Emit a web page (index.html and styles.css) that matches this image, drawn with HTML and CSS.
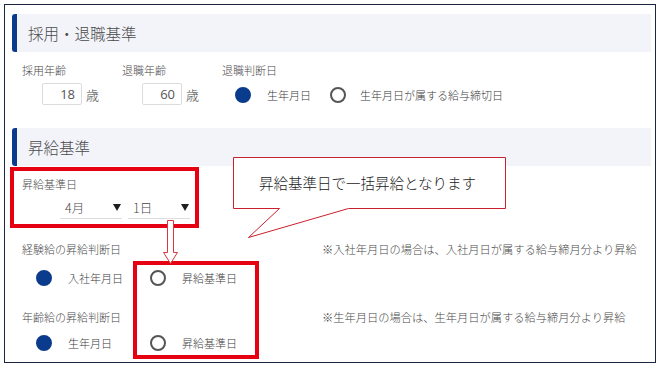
FILE: index.html
```html
<!DOCTYPE html>
<html lang="ja">
<head>
<meta charset="utf-8">
<link rel="stylesheet" href="styles.css">
</head>
<body>
<div class="frame">
  <div class="sec-head">採用・退職基準</div>
  <div class="cols">
    <div class="col">
      <div class="lbl">採用年齢</div>
      <div class="ctl ind-input"><span class="inp">18</span><span class="unit">歳</span></div>
    </div>
    <div class="col">
      <div class="lbl">退職年齢</div>
      <div class="ctl ind-input"><span class="inp">60</span><span class="unit">歳</span></div>
    </div>
    <div class="col col-wide">
      <div class="lbl">退職判断日</div>
      <div class="ctl ind-radio">
        <span class="opt opt-a"><span class="radio on"></span><span class="opt-text">生年月日</span></span>
        <span class="opt"><span class="radio"></span><span class="opt-text">生年月日が属する給与締切日</span></span>
      </div>
    </div>
  </div>

  <div class="sec-head sec-head-2">昇給基準</div>
  <div class="field">
    <div class="lbl">昇給基準日</div>
    <div class="selects">
      <span class="sel"><span class="sel-text">4月</span><span class="tri"></span></span>
      <span class="sel"><span class="sel-text">1日</span><span class="tri"></span></span>
    </div>
  </div>

  <div class="rowhead rh-1"><span class="lbl">経験給の昇給判断日</span><span class="note">※入社年月日の場合は、入社月日が属する給与締月分より昇給</span></div>
  <div class="radios r-1">
    <span class="opt opt-b"><span class="radio on"></span><span class="opt-text">入社年月日</span></span>
    <span class="opt"><span class="radio"></span><span class="opt-text">昇給基準日</span></span>
  </div>

  <div class="rowhead rh-2"><span class="lbl">年齢給の昇給判断日</span><span class="note">※生年月日の場合は、生年月日が属する給与締月分より昇給</span></div>
  <div class="radios r-2">
    <span class="opt opt-b"><span class="radio on"></span><span class="opt-text">生年月日</span></span>
    <span class="opt"><span class="radio"></span><span class="opt-text">昇給基準日</span></span>
  </div>

  <div class="redbox redbox-1"></div>
  <div class="redbox redbox-2"></div>

  <svg class="arrow" width="20" height="46" viewBox="0 0 20 46">
    <path d="M7.5 0.5 H13.5 V32.5 H17.5 L10.5 43.5 L3.5 32.5 H7.5 Z" fill="#fff" stroke="#d9363e" stroke-width="1"/>
  </svg>

  <div class="callout">
    <svg class="callout-shape" width="276" height="84" viewBox="0 0 276 84">
      <path d="M0.5 0.5 H272.5 V51.5 H115.5 L15.5 80.5 L46.5 51.5 H0.5 Z" fill="#fff" stroke="#c8202e" stroke-width="1"/>
    </svg>
    <div class="callout-text">昇給基準日で一括昇給となります</div>
  </div>
</div>
</body>
</html>
```

FILE: styles.css
```css
* { box-sizing: border-box; }
html, body { margin: 0; padding: 0; background: #fff; }
body {
  font-family: "Noto Sans CJK JP", "Noto Sans", sans-serif;
  font-weight: 300;
  color: #3c3c3c;
}
.frame {
  position: relative;
  margin: 4px 0 0 4px;
  width: 652px;
  height: 359px;
  border: 1px solid #1b2640;
  overflow: hidden;
}
.sec-head {
  margin: 9px 4px 0 7px;
  height: 38px;
  background: #f3f4fa;
  border-left: 5px solid #0b3b8c;
  border-radius: 3px 0 0 3px;
  padding-left: 11px;
  display: flex;
  align-items: center;
  font-size: 15.5px;
  color: #4a4a4a;
}
.sec-head-2 { margin-top: 22px; }

.lbl { font-size: 11px; line-height: 14px; color: #4a4a4a; }

.cols {
  display: flex;
  padding-left: 17px;
  margin-top: 11px;
}
.col { width: 100px; }
.col-wide { width: auto; }
.ctl { display: flex; align-items: center; margin-top: 6px; height: 22px; }
.ind-input { padding-left: 20px; }
.ind-radio { padding-left: 13px; margin-top: 7px; }
.inp {
  width: 40px;
  height: 22px;
  border: 1px solid #dcdcdc;
  border-radius: 2px;
  font-size: 13px;
  line-height: 20px;
  text-align: right;
  padding-right: 6px;
  color: #555;
  font-family: "Open Sans", "Noto Sans", sans-serif;
  font-weight: 400;
}
.unit { margin-left: 4px; font-size: 13px; color: #4a4a4a; }

.opt { display: inline-flex; align-items: center; }
.opt-a { width: 95px; }
.opt-b { width: 114px; }
.radio {
  width: 16px; height: 16px;
  border-radius: 50%;
  border: 2px solid #555;
  background: #fff;
  flex: none;
}
.radio.on { background: #0b3b8c; border-color: #0b3b8c; }
.opt-text { margin-left: 16px; font-size: 11px; color: #3c3c3c; }
.ind-radio .opt + .opt .opt-text { margin-left: 14px; }

.field { padding-left: 17px; margin-top: 11px; }
.selects { display: flex; gap: 6px; margin-left: 38px; margin-top: 8px; }
.sel {
  width: 62px;
  height: 20px;
  border-bottom: 1px solid #dedede;
  display: flex;
  align-items: center;
  justify-content: space-between;
  padding: 0 1px 2px 5px;
  font-size: 12.5px;
  color: #4a4a4a;
}
.tri {
  width: 0; height: 0;
  border-left: 4px solid transparent;
  border-right: 4px solid transparent;
  border-top: 7px solid #1e1e1e;
}

.rowhead { display: flex; padding-left: 17px; align-items: center; height: 14px; }
.rowhead .lbl { width: 300px; }
.note { font-size: 11.25px; color: #4a4a4a; line-height: 14px; }
.rh-1 { margin-top: 23px; }
.rh-2 { margin-top: 22px; }

.radios { display: flex; align-items: center; height: 20px; padding-left: 31px; }
.r-1 { margin-top: 12px; }
.r-2 { margin-top: 9px; }

.redbox {
  position: absolute;
  border: 4px solid #e50012;
}
.redbox-1 { left: 5px; top: 162px; width: 189px; height: 61px; }
.redbox-2 { left: 128px; top: 256px; width: 126px; height: 98px; border-width: 4px; }

.arrow { position: absolute; left: 155px; top: 215px; }

.callout { position: absolute; left: 228px; top: 152px; width: 276px; height: 84px; }
.callout-shape { position: absolute; left: 0; top: 0; }
.callout-text {
  position: absolute;
  left: 26px;
  top: 16px;
  font-size: 14.5px;
  line-height: 20px;
  color: #222;
  white-space: nowrap;
}
```
